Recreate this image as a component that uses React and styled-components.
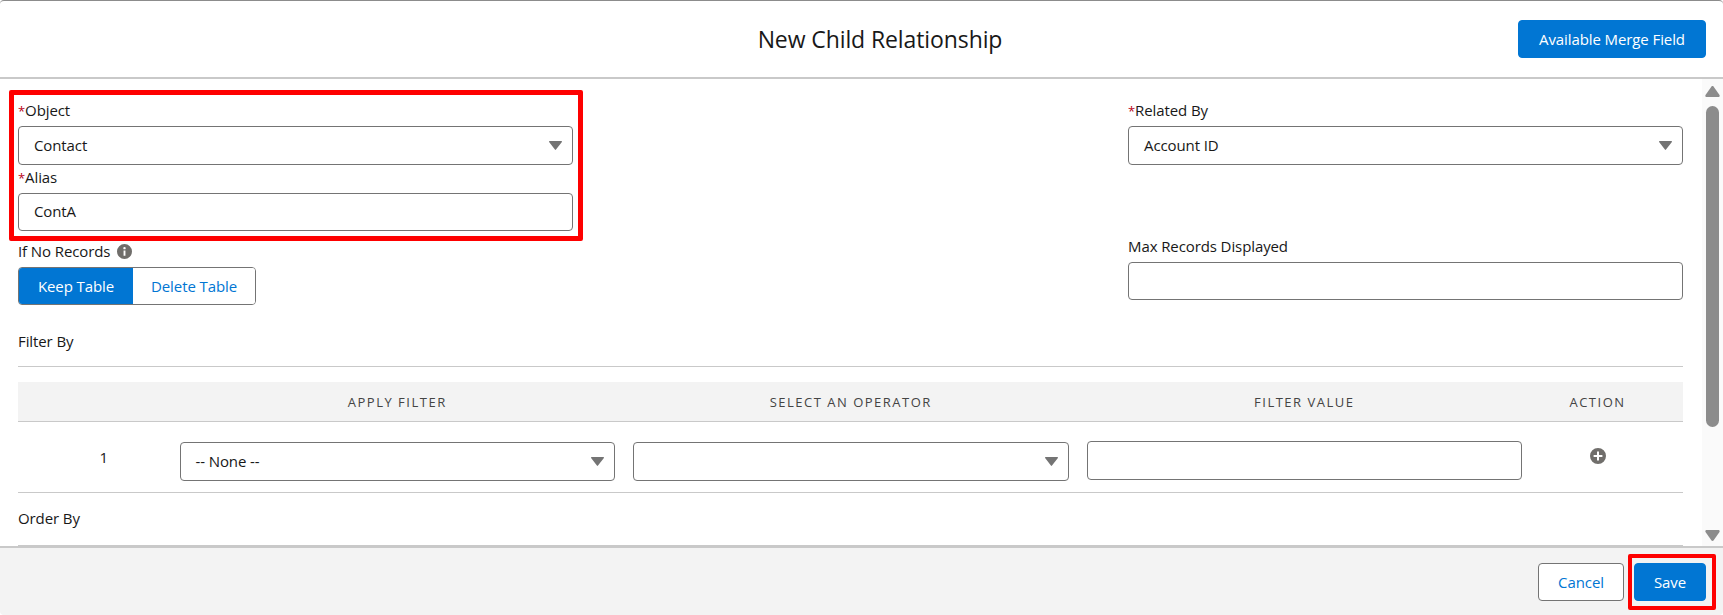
import styled, { createGlobalStyle } from "styled-components";

const GlobalStyle = createGlobalStyle`
  html, body {
    margin: 0;
    padding: 0;
    background: #fff;
  }
  body {
    font-family: "Open Sans", "Noto Sans", "Liberation Sans", sans-serif;
    font-size: 15px;
    letter-spacing: -0.1px;
    color: #181818;
  }
  * {
    box-sizing: border-box;
  }
`;

const BLUE = "#0176d3";
const BORDER = "#747474";
const RED = "#fe0000";

const Modal = styled.div`
  display: flex;
  flex-direction: column;
  width: 1723px;
  height: 615px;
  overflow: hidden;
  border-top: 1px solid #8c8c8c;
  border-radius: 4px;
`;

const Header = styled.header`
  flex: none;
  display: grid;
  grid-template-columns: 1fr auto;
  align-items: center;
  height: 78px;
  padding: 0 17px 0 242px;
  border-bottom: 2px solid #c9c9c9;
`;

const Title = styled.h1`
  margin: 0;
  text-align: center;
  font-size: 23px;
  font-weight: 400;
  line-height: 28px;
`;

const Button = styled.button`
  height: 38px;
  width: ${({ $width }) => $width}px;
  padding: 0;
  border: 1px solid ${({ $primary }) => ($primary ? BLUE : BORDER)};
  border-radius: 4px;
  background: ${({ $primary }) => ($primary ? BLUE : "#fff")};
  color: ${({ $primary }) => ($primary ? "#fff" : BLUE)};
  font: inherit;
  letter-spacing: inherit;
`;

const Body = styled.main`
  flex: none;
  display: flex;
  height: 467px;
`;

const Content = styled.div`
  flex: none;
  width: 1702px;
  padding: 11px 19px 0 18px;
  overflow: hidden;
`;

const Columns = styled.div`
  display: grid;
  grid-template-columns: 555px 555px;
  justify-content: space-between;
`;

const Highlight = styled.div`
  margin: 0 -10px 1px -9px;
  padding: 6px 5px 5px 4px;
  border: 5px solid ${RED};
  border-radius: 2px;
`;

const Field = styled.div`
  display: flex;
  flex-direction: column;
  margin-top: ${({ $top }) => $top || 0}px;
`;

const Label = styled.div`
  display: flex;
  align-items: center;
  gap: 7px;
  height: 20px;
  margin-bottom: 5px;
  padding-bottom: 2px;
  line-height: 18px;
`;

const Required = styled.span`
  color: #ba0517;
  font-size: 13px;
`;

const Control = styled.div`
  display: flex;
  align-items: center;
  justify-content: space-between;
  height: ${({ $height }) => $height || 38}px;
  padding: 0 10px 2px 15px;
  border: 1px solid ${BORDER};
  border-radius: 4px;
  background: #fff;
`;

const Caret = styled.svg`
  flex: none;
  width: 13px;
  height: 9px;
  margin-top: 2px;
  fill: ${BORDER};
`;

const Toggle = styled.div`
  display: grid;
  grid-template-columns: 114px 122px;
  width: 238px;
  height: 38px;
  overflow: hidden;
  border: 1px solid ${BORDER};
  border-radius: 4px;
`;

const ToggleOption = styled.div`
  display: flex;
  align-items: center;
  justify-content: center;
  background: ${({ $active }) => ($active ? BLUE : "#fff")};
  color: ${({ $active }) => ($active ? "#fff" : BLUE)};
`;

const SectionTitle = styled.div`
  height: 20px;
  margin-top: ${({ $top }) => $top}px;
  line-height: 18px;
`;

const Divider = styled.div`
  height: 1px;
  margin-top: ${({ $top }) => $top}px;
  background: #c9c9c9;
`;

const TableRow = styled.div`
  display: grid;
  grid-template-columns: 152.5px 453.5px 453.5px 453.5px 152px;
`;

const HeadRow = styled(TableRow)`
  align-items: center;
  height: 40px;
  margin-top: 15px;
  border-bottom: 1px solid #c9c9c9;
  background: #f3f3f3;
`;

const HeadCell = styled.div`
  padding-right: ${({ $inset }) => $inset || 0}px;
  text-align: center;
  color: #444;
  font-size: 13px;
  letter-spacing: 1.5px;
  text-transform: uppercase;
`;

const DataRow = styled(TableRow)`
  height: 71px;
  border-bottom: 1px solid #c9c9c9;
`;

const IndexCell = styled.div`
  padding: 25px 0 0 19px;
  text-align: center;
  line-height: 20px;
`;

const InputCell = styled.div`
  padding: ${({ $top }) => $top}px 9px 0;
`;

const ActionCell = styled.div`
  display: flex;
  justify-content: center;
  padding: 26px 19px 0 0;
`;

const Glyph = styled.svg`
  flex: none;
  width: ${({ $size }) => $size}px;
  height: ${({ $size }) => $size}px;
  fill: #706e6b;
`;

const ScrollTrack = styled.div`
  flex: none;
  display: flex;
  flex-direction: column;
  align-items: center;
  width: 21px;
  padding: 7px 0 5px;
  background: #fafafa;
`;

const ScrollArrow = styled.svg`
  flex: none;
  width: 15px;
  height: 11px;
  fill: #8c8c8c;
`;

const ScrollThumb = styled.div`
  flex: none;
  width: 13px;
  height: 321px;
  margin: 9px 0 auto;
  border-radius: 7px;
  background: #8c8c8c;
`;

const Footer = styled.footer`
  flex: 1;
  display: flex;
  justify-content: flex-end;
  align-items: center;
  gap: 4px;
  padding: 0 7px 0 0;
  border-top: 2px solid #c9c9c9;
  background: #f3f3f3;
`;

const SaveHighlight = styled.div`
  display: flex;
  padding: 5px 6px 5px 2px;
  border: 4px solid ${RED};
  border-radius: 2px;
`;

const SelectBox = ({ value, height }) => (
  <Control $height={height}>
    <span>{value}</span>
    <Caret viewBox="0 0 13 9">
      <path d="M0.6 0h11.8c.5 0 .8.6.5 1L7 8.6c-.3.4-.8.4-1.1 0L.1 1C-.2.6.1 0 .6 0z" />
    </Caret>
  </Control>
);

const InfoIcon = () => (
  <Glyph $size={15} viewBox="0 0 16 16">
    <path d="M8 0a8 8 0 1 0 0 16A8 8 0 0 0 8 0zm1 12.4H7V7h2zM8 5.7a1.3 1.3 0 1 1 0-2.6 1.3 1.3 0 0 1 0 2.6z" />
  </Glyph>
);

const PlusIcon = () => (
  <Glyph $size={16} viewBox="0 0 16 16">
    <path d="M8 0a8 8 0 1 0 0 16A8 8 0 0 0 8 0zm4.4 9H9v3.4H7V9H3.6V7H7V3.6h2V7h3.4z" />
  </Glyph>
);

export default function App() {
  return (
    <>
      <GlobalStyle />
      <Modal>
        <Header>
          <Title>New Child Relationship</Title>
          <Button $primary $width={188}>
            Available Merge Field
          </Button>
        </Header>
        <Body>
          <Content>
            <Columns>
              <div>
                <Highlight>
                  <Field>
                    <Label>
                      <span>
                        <Required>*</Required>Object
                      </span>
                    </Label>
                    <SelectBox value="Contact" height={39} />
                  </Field>
                  <Field $top={3}>
                    <Label>
                      <span>
                        <Required>*</Required>Alias
                      </span>
                    </Label>
                    <Control>ContA</Control>
                  </Field>
                </Highlight>
                <Field>
                  <Label>
                    If No Records
                    <InfoIcon />
                  </Label>
                  <Toggle>
                    <ToggleOption $active>Keep Table</ToggleOption>
                    <ToggleOption>Delete Table</ToggleOption>
                  </Toggle>
                </Field>
              </div>
              <div>
                <Field $top={11}>
                  <Label>
                    <span>
                      <Required>*</Required>Related By
                    </span>
                  </Label>
                  <SelectBox value="Account ID" height={39} />
                </Field>
                <Field $top={72}>
                  <Label>Max Records Displayed</Label>
                  <Control />
                </Field>
              </div>
            </Columns>
            <SectionTitle $top={27}>Filter By</SectionTitle>
            <Divider $top={14} />
            <HeadRow>
              <HeadCell />
              <HeadCell>Apply Filter</HeadCell>
              <HeadCell>Select an Operator</HeadCell>
              <HeadCell>Filter Value</HeadCell>
              <HeadCell $inset={19}>Action</HeadCell>
            </HeadRow>
            <DataRow>
              <IndexCell>1</IndexCell>
              <InputCell $top={20}>
                <SelectBox value="-- None --" height={39} />
              </InputCell>
              <InputCell $top={20}>
                <SelectBox value="" height={39} />
              </InputCell>
              <InputCell $top={19}>
                <Control $height={39} />
              </InputCell>
              <ActionCell>
                <PlusIcon />
              </ActionCell>
            </DataRow>
            <SectionTitle $top={16}>Order By</SectionTitle>
            <Divider $top={16} />
          </Content>
          <ScrollTrack>
            <ScrollArrow viewBox="0 0 15 11">
              <path d="M6.5.5c.5-.6 1.5-.6 2 0l6 8.5c.4.8 0 2-1 2H1.5c-1 0-1.4-1.2-1-2z" />
            </ScrollArrow>
            <ScrollThumb />
            <ScrollArrow viewBox="0 0 15 11">
              <path d="M6.5 10.5c.5.6 1.5.6 2 0l6-8.5c.4-.8 0-2-1-2H1.5c-1 0-1.4 1.2-1 2z" />
            </ScrollArrow>
          </ScrollTrack>
        </Body>
        <Footer>
          <Button $width={86}>Cancel</Button>
          <SaveHighlight>
            <Button $primary $width={72}>
              Save
            </Button>
          </SaveHighlight>
        </Footer>
      </Modal>
    </>
  );
}
